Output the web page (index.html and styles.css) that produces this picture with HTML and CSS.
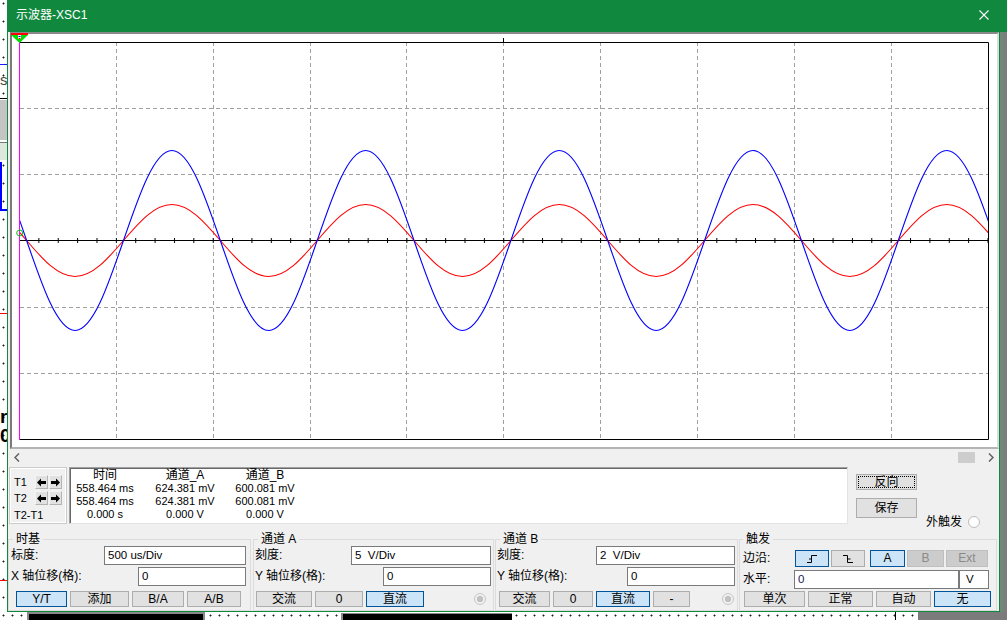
FILE: index.html
```html
<!DOCTYPE html>
<html lang="zh-CN">
<head>
<meta charset="utf-8">
<title>示波器-XSC1</title>
<link rel="stylesheet" href="styles.css">
</head>
<body>
<div class="desk">
  <div class="lk lk-blue1"></div>
  <div class="lk lk-text">s</div>
  <div class="lk lk-line"></div>
  <div class="lk lk-gray"></div>
  <div class="lk lk-green"></div>
  <div class="lk lk-bluev"></div>
  <div class="lk lk-blueh"></div>
  <div class="lk lk-red1"></div>
  <div class="lk lk-r">r</div>
  <div class="lk lk-0">0</div>
  <div class="lk lk-red2"></div>
  <div class="lk lk-bar1"></div>
  <div class="lk lk-bar2"></div>
  <div class="lk lk-vline"></div>
  <div class="lk lk-shadow-b"></div>
  <div class="lk lk-title-ext"></div>
  <div class="lk lk-shadow-r"></div>

  <div class="win">
    <div class="titlebar">
      <span class="title">示波器-XSC1</span>
      <svg class="close" width="10" height="10" viewBox="0 0 10 10"><path d="M0.5 0.5 L9.5 9.5 M9.5 0.5 L0.5 9.5" stroke="#fff" stroke-width="1.1" fill="none"/></svg>
    </div>

    <div class="plot-outer">
      <div class="plot-box">
        <svg class="plot-svg" width="985" height="413" viewBox="12 34 985 413">
          <defs>
            <clipPath id="plotclip"><rect x="20" y="42" width="968" height="398"/></clipPath>
            <pattern id="ticks" patternUnits="userSpaceOnUse" x="19" y="0" width="19.37" height="20">
              <rect x="0" y="0" width="1" height="20" fill="#000"/>
            </pattern>
          </defs>
          <g stroke="#a0a0a0" stroke-width="1" stroke-dasharray="4 3" fill="none">
            <path d="M116.5 42 V440 M213.5 42 V440 M310.5 42 V440 M406.5 42 V440 M503.5 42 V440 M600.5 42 V440 M697.5 42 V440 M794.5 42 V440 M891.5 42 V440"/>
            <path d="M20 108.5 H988 M20 174.5 H988 M20 307.5 H988 M20 373.5 H988"/>
          </g>
          <path d="M19.5 240.5 H988.5" stroke="#000" stroke-width="1"/>
          <rect x="19" y="238" width="970" height="5" fill="url(#ticks)"/>
          <g clip-path="url(#plotclip)" fill="none" stroke-width="1.1">
            <path stroke="#ff0000" d="M-21.8,204.5 c17.52,0 32.63,17.54 48.425,36 s30.9,36 48.425,36 s32.63,-17.54 48.425,-36 s30.9,-36 48.425,-36 s32.63,17.54 48.425,36 s30.9,36 48.425,36 s32.63,-17.54 48.425,-36 s30.9,-36 48.425,-36 s32.63,17.54 48.425,36 s30.9,36 48.425,36 s32.63,-17.54 48.425,-36 s30.9,-36 48.425,-36 s32.63,17.54 48.425,36 s30.9,36 48.425,36 s32.63,-17.54 48.425,-36 s30.9,-36 48.425,-36 s32.63,17.54 48.425,36 s30.9,36 48.425,36 s32.63,-17.54 48.425,-36 s30.9,-36 48.425,-36 s32.63,17.54 48.425,36 s30.9,36 48.425,36 s32.63,-17.54 48.425,-36 s30.9,-36 48.425,-36"/>
            <path stroke="#0000ff" d="M-21.8,150.5 c17.52,0 32.63,43.85 48.425,90 s30.9,90 48.425,90 s32.63,-43.85 48.425,-90 s30.9,-90 48.425,-90 s32.63,43.85 48.425,90 s30.9,90 48.425,90 s32.63,-43.85 48.425,-90 s30.9,-90 48.425,-90 s32.63,43.85 48.425,90 s30.9,90 48.425,90 s32.63,-43.85 48.425,-90 s30.9,-90 48.425,-90 s32.63,43.85 48.425,90 s30.9,90 48.425,90 s32.63,-43.85 48.425,-90 s30.9,-90 48.425,-90 s32.63,43.85 48.425,90 s30.9,90 48.425,90 s32.63,-43.85 48.425,-90 s30.9,-90 48.425,-90 s32.63,43.85 48.425,90 s30.9,90 48.425,90 s32.63,-43.85 48.425,-90 s30.9,-90 48.425,-90"/>
          </g>
          <path d="M19.5 42.5 H988.5 V439.5 H19.5" stroke="#000" stroke-width="1" fill="none"/>
          <path d="M503.5 38 V42" stroke="#000" stroke-width="1"/>
          <path d="M19.5 42 V440" stroke="#ff00ff" stroke-width="1"/>
          <circle cx="19.7" cy="233" r="3" fill="none" stroke="#00c800" stroke-width="1"/>
          <rect x="11" y="33" width="17" height="2" fill="#ff0000"/>
          <polygon points="11,35 28,35 19.5,43" fill="#00e000"/>
          <rect x="18" y="35" width="3" height="4" fill="#fff"/>
          <rect x="18.5" y="36" width="2" height="1" fill="#0000ff"/>
          <rect x="18.5" y="38" width="2" height="1" fill="#ff0000"/>
        </svg>
      </div>
    </div>

    <div class="hscroll">
      <div class="sb-btn"><svg width="6" height="9" viewBox="0 0 6 9"><polyline points="5,0.5 1,4.5 5,8.5" fill="none" stroke="#606060" stroke-width="1.5"/></svg></div>
      <div class="sb-track"><div class="sb-thumb"></div></div>
      <div class="sb-btn"><svg width="6" height="9" viewBox="0 0 6 9"><polyline points="1,0.5 5,4.5 1,8.5" fill="none" stroke="#606060" stroke-width="1.5"/></svg></div>
    </div>

    <div class="readout-row">
      <div class="tbox">
        <div class="trow">
          <span class="tlabel">T1</span>
          <span class="abtn"><svg width="9" height="9" viewBox="0 0 9 9"><path d="M0 4.5 L4 0.5 V3 H9 V6 H4 V8.5 Z" fill="#000"/></svg></span>
          <span class="abtn"><svg width="9" height="9" viewBox="0 0 9 9"><path d="M9 4.5 L5 0.5 V3 H0 V6 H5 V8.5 Z" fill="#000"/></svg></span>
        </div>
        <div class="trow trow2">
          <span class="tlabel">T2</span>
          <span class="abtn"><svg width="9" height="9" viewBox="0 0 9 9"><path d="M0 4.5 L4 0.5 V3 H9 V6 H4 V8.5 Z" fill="#000"/></svg></span>
          <span class="abtn"><svg width="9" height="9" viewBox="0 0 9 9"><path d="M9 4.5 L5 0.5 V3 H0 V6 H5 V8.5 Z" fill="#000"/></svg></span>
        </div>
        <div class="trow trow3"><span class="tlabel">T2-T1</span></div>
      </div>
      <div class="readout">
        <div class="rgrid">
          <div class="rh">时间</div><div class="rh">通道_A</div><div class="rh">通道_B</div>
          <div class="rv">558.464 ms</div><div class="rv">624.381 mV</div><div class="rv">600.081 mV</div>
          <div class="rv">558.464 ms</div><div class="rv">624.381 mV</div><div class="rv">600.081 mV</div>
          <div class="rv">0.000 s</div><div class="rv">0.000 V</div><div class="rv">0.000 V</div>
        </div>
      </div>
      <div class="side">
        <div class="side-btns">
          <button class="btn side-btn focus">反向</button>
          <button class="btn side-btn save">保存</button>
        </div>
        <div class="ext"><span>外触发</span><span class="radio radio-empty"></span></div>
      </div>
    </div>

    <div class="controls">
      <fieldset class="grp g1">
        <legend>时基</legend>
        <div class="frow">
          <span class="flabel">标度:</span>
          <div class="inp w142">500 us/Div</div>
        </div>
        <div class="frow frow2">
          <span class="flabel">X 轴位移(格):</span>
          <div class="inp w108">0</div>
        </div>
        <div class="brow brow-g1">
          <button class="btn sel w51">Y/T</button>
          <button class="btn w59">添加</button>
          <button class="btn w52">B/A</button>
          <button class="btn w54">A/B</button>
        </div>
      </fieldset>

      <fieldset class="grp g2">
        <legend>通道 A</legend>
        <div class="frow">
          <span class="flabel">刻度:</span>
          <div class="inp w140">5&nbsp; V/Div</div>
        </div>
        <div class="frow frow2">
          <span class="flabel">Y 轴位移(格):</span>
          <div class="inp w108">0</div>
        </div>
        <div class="brow brow-g2">
          <button class="btn w56">交流</button>
          <button class="btn w48">0</button>
          <button class="btn sel w58">直流</button>
          <span class="radio radio-dis"></span>
        </div>
      </fieldset>

      <fieldset class="grp g3">
        <legend>通道 B</legend>
        <div class="frow">
          <span class="flabel">刻度:</span>
          <div class="inp w139">2&nbsp; V/Div</div>
        </div>
        <div class="frow frow2">
          <span class="flabel">Y 轴位移(格):</span>
          <div class="inp w108">0</div>
        </div>
        <div class="brow brow-g3">
          <button class="btn w51">交流</button>
          <button class="btn w40">0</button>
          <button class="btn sel w54">直流</button>
          <button class="btn w37">-</button>
          <span class="radio radio-dis"></span>
        </div>
      </fieldset>

      <fieldset class="grp g4">
        <legend>触发</legend>
        <div class="trig-row1">
          <span class="tglabel">边沿:</span>
          <button class="btn sel ebtn w34"><svg width="12" height="10" viewBox="0 0 12 10"><path d="M1 8.5 H5.5 V1.5 H11 M5.5 5 H3" fill="none" stroke="#000" stroke-width="1"/></svg></button>
          <button class="btn ebtn w34"><svg width="12" height="10" viewBox="0 0 12 10"><path d="M1 1.5 H5.5 V8.5 H11 M5.5 5 H8.5" fill="none" stroke="#000" stroke-width="1"/></svg></button>
          <button class="btn sel ebtn w35 gapA">A</button>
          <button class="btn dis ebtn w37">B</button>
          <button class="btn dis ebtn w42">Ext</button>
        </div>
        <div class="trig-row2">
          <span class="tglabel tglabel2">水平:</span>
          <div class="inp w165 lvl">0</div>
          <div class="inp w30 unit">V</div>
        </div>
        <div class="brow brow-g4">
          <button class="btn w61">单次</button>
          <button class="btn w65">正常</button>
          <button class="btn w55">自动</button>
          <button class="btn sel w57">无</button>
        </div>
      </fieldset>
    </div>
  </div>
</div>
</body>
</html>
```

FILE: styles.css
```css
* { box-sizing: border-box; }

body {
  margin: 0;
  background: #fff;
  font-family: "Liberation Sans", "Noto Sans CJK SC", sans-serif;
  font-size: 12px;
  color: #000;
}

.desk {
  position: relative;
  width: 1007px;
  height: 620px;
  overflow: hidden;
  background-color: #fff;
  background-image: radial-gradient(circle at 3.5px 3.5px, #222 0.8px, transparent 1.2px);
  background-size: 9px 18px;
}

/* background canvas fragments (behind the window) */
.lk { position: absolute; }
.lk-blue1 { left: 0; top: 64px; width: 7px; height: 1px; background: #1a1aff; }
.lk-text { left: 0; top: 71px; font-size: 15px; line-height: 18px; color: #444; }
.lk-line { left: 0; top: 98px; width: 7px; height: 1px; background: #000; }
.lk-gray { left: 0; top: 100px; width: 7px; height: 40px; background: #c4c4c4; }
.lk-green { left: 0; top: 142px; width: 7px; height: 18px; background: #dbe8db; border-top: 1px solid #777; }
.lk-bluev { left: 0; top: 162px; width: 2px; height: 48px; background: #0000ff; }
.lk-blueh { left: 0; top: 209px; width: 7px; height: 2px; background: #0000ff; }
.lk-red1 { left: 0; top: 313px; width: 7px; height: 1px; background: #ff0000; }
.lk-r { left: 0; top: 407px; font-weight: bold; font-size: 19px; line-height: 20px; }
.lk-0 { left: 0; top: 426px; font-weight: bold; font-size: 19px; line-height: 20px; }
.lk-red2 { left: 0; top: 580px; width: 7px; height: 1px; background: #ff0000; }
.lk-bar1 { left: 27px; top: 612px; width: 178px; height: 10px; background: #000; border: 2px solid #8a8a8a; border-bottom: 0; }
.lk-bar2 { left: 341px; top: 613px; width: 171px; height: 10px; background: #000; border-left: 2px solid #8a8a8a; border-top: 1px solid #8a8a8a; }
.lk-vline { left: 895px; top: 612px; width: 1px; height: 8px; background: #000; }
.lk-shadow-b { left: 918px; top: 612px; width: 89px; height: 8px; background: #7b7b7b; }
.lk-title-ext { left: 1000px; top: 0; width: 7px; height: 32px; background: #10893e; }
.lk-shadow-r { left: 1000px; top: 32px; width: 7px; height: 580px; background: linear-gradient(to right, #6f8a78, #7c7c7c); }

/* window */
.win {
  position: absolute;
  left: 7px;
  top: 0;
  width: 993px;
  height: 612px;
  border: 1px solid #10893e;
  border-top: 0;
  background: #f0f0f0;
  display: flex;
  flex-direction: column;
}

.titlebar {
  flex: none;
  height: 32px;
  background: #10893e;
  display: flex;
  justify-content: space-between;
  align-items: flex-start;
}
.title {
  margin: 8px 0 0 8px;
  color: #fff;
  font-size: 12px;
  line-height: 14px;
}
.close { margin: 10px 10px 0 0; display: block; }

.plot-outer {
  flex: none;
  height: 417px;
  padding-left: 2px;
}
.plot-box {
  height: 417px;
  border-style: solid;
  border-width: 2px;
  border-color: #8a8a8a #dcdcdc #b4b4b4 #7a7a7a;
  background: #fff;
}
.plot-svg { display: block; overflow: visible; }

.hscroll {
  flex: none;
  height: 16px;
  display: flex;
  align-items: center;
}
.sb-btn {
  width: 17px;
  height: 16px;
  display: flex;
  align-items: center;
  justify-content: center;
}
.sb-btn svg { display: block; }
.sb-track {
  flex: 1;
  height: 16px;
  display: flex;
  align-items: center;
  justify-content: flex-end;
  padding-right: 7px;
}
.sb-thumb { width: 17px; height: 11px; background: #cdcdcd; }

/* readout */
.readout-row {
  flex: none;
  height: 60px;
  display: flex;
}
.tbox {
  margin: 2px 0 0 1px;
  width: 58px;
  height: 57px;
  border: 1px solid #cbcbcb;
  box-shadow: inset -1px -1px 0 #fff, inset 1px 1px 0 #fff;
  padding: 7px 0 0 4px;
}
.trow { display: flex; align-items: center; height: 14px; }
.trow2 { margin-top: 2px; }
.trow3 { margin-top: 3px; }
.tlabel { width: 21px; font-size: 11px; line-height: 14px; white-space: nowrap; }
.abtn {
  width: 13px;
  height: 14px;
  margin-right: 1px;
  background: #e1e1e1;
  border: 1px solid;
  border-color: #f4f4f4 #b4b4b4 #b4b4b4 #f4f4f4;
  display: flex;
  align-items: center;
  justify-content: center;
}
.abtn svg { display: block; }

.readout {
  margin: 2px 0 0 2px;
  width: 779px;
  height: 57px;
  background: #fff;
  border: 1px solid;
  border-color: #a0a0a0 #e3e3e3 #e3e3e3 #a0a0a0;
  box-shadow: inset 1px 1px 0 #696969;
  padding-top: 1px;
}
.rgrid {
  display: grid;
  grid-template-columns: 70px 90px 70px;
}
.rh { text-align: center; font-size: 12px; line-height: 13px; white-space: nowrap; }
.rv { text-align: center; font-size: 11px; line-height: 13px; white-space: nowrap; }

.side { flex: 1; display: flex; padding-left: 8px; }
.side-btns { display: flex; flex-direction: column; padding-top: 9px; }
.side-btn { width: 61px; height: 19px; line-height: 17px; }
.side-btn.save { margin-top: 8px; height: 20px; }
.focus { outline: 1px dotted #000; outline-offset: -3px; }
.ext {
  margin-left: 9px;
  align-self: flex-end;
  margin-bottom: -4px;
  height: 14px;
  display: flex;
  align-items: center;
  gap: 6px;
  line-height: 14px;
  white-space: nowrap;
}

.radio {
  display: block;
  width: 12px;
  height: 12px;
  border-radius: 50%;
  flex: none;
}
.radio-empty { border: 1px solid #bdbdbd; background: #fff; }
.radio-dis {
  border: 1px solid #c6c6c6;
  background: radial-gradient(circle, #c2c2c2 3px, #f2f2f2 3.6px);
  margin-left: auto;
}

/* controls */
.controls {
  flex: none;
  height: 86px;
  display: flex;
  padding-top: 7px;
}
.grp {
  margin: 0;
  padding: 0;
  min-width: 0;
  height: 79px;
  border: 1px solid #dcdcdc;
}
.grp legend {
  padding: 0 3px;
  margin-left: 4px;
  font-size: 12px;
  line-height: 14px;
}
.g1 { width: 243px; }
.g2 { width: 241px; margin-left: 2px; }
.g3 { width: 243px; margin-left: 1px; }
.g4 { width: 258px; margin-left: 1px; }
.g4 legend { margin-left: 3px; }

.frow {
  display: flex;
  align-items: center;
  justify-content: space-between;
  height: 19px;
  padding-right: 2px;
}
.g1 .frow { padding-right: 4px; }
.frow2 { margin-top: 2px; }
.flabel { padding-left: 1px; line-height: 19px; white-space: nowrap; }
.g1 .flabel { padding-left: 2px; }

.inp {
  height: 19px;
  border: 1px solid #7a7a7a;
  background: #fff;
  padding-left: 3px;
  font-size: 11.5px;
  line-height: 17px;
  white-space: nowrap;
}

.btn {
  height: 16px;
  padding: 0;
  margin: 0;
  border: 1px solid #adadad;
  background: #e1e1e1;
  color: #000;
  font-family: inherit;
  font-size: 12px;
  line-height: 14px;
  text-align: center;
  flex: none;
  border-radius: 0;
}
.btn.sel { background: #cce4f7; border-color: #005499; }
.btn.dis { background: #cccccc; border-color: #bfbfbf; color: #8a8a8a; }

.brow { display: flex; align-items: center; height: 16px; margin-top: 5px; gap: 3px; }
.brow-g1 { padding-left: 7px; }
.brow-g2 { padding-left: 2px; padding-right: 7px; }
.brow-g3 { padding-left: 3px; padding-right: 3px; }
.brow-g4 { padding-left: 4px; margin-top: 2px; }

.trig-row1 { display: flex; align-items: center; height: 17px; margin-top: 4px; gap: 2px; }
.trig-row2 { display: flex; align-items: center; height: 19px; margin-top: 3px; }
.tglabel { width: 53px; padding-left: 3px; line-height: 17px; white-space: nowrap; }
.tglabel2 { width: 54px; line-height: 19px; }
.ebtn { height: 17px; display: flex; align-items: center; justify-content: center; line-height: 15px; }
.ebtn svg { display: block; }
.gapA { margin-left: 3px; }
.lvl { color: #1a1a60; }
.unit { padding-left: 6px; }

.w30 { width: 30px; }
.w34 { width: 34px; }
.w35 { width: 35px; }
.w37 { width: 37px; }
.w40 { width: 40px; }
.w42 { width: 42px; }
.w48 { width: 48px; }
.w51 { width: 51px; }
.w52 { width: 52px; }
.w54 { width: 54px; }
.w55 { width: 55px; }
.w56 { width: 56px; }
.w57 { width: 57px; }
.w58 { width: 58px; }
.w59 { width: 59px; }
.w61 { width: 61px; }
.w65 { width: 65px; }
.w108 { width: 108px; }
.w139 { width: 139px; }
.w140 { width: 140px; }
.w142 { width: 142px; }
.w165 { width: 165px; }
```
